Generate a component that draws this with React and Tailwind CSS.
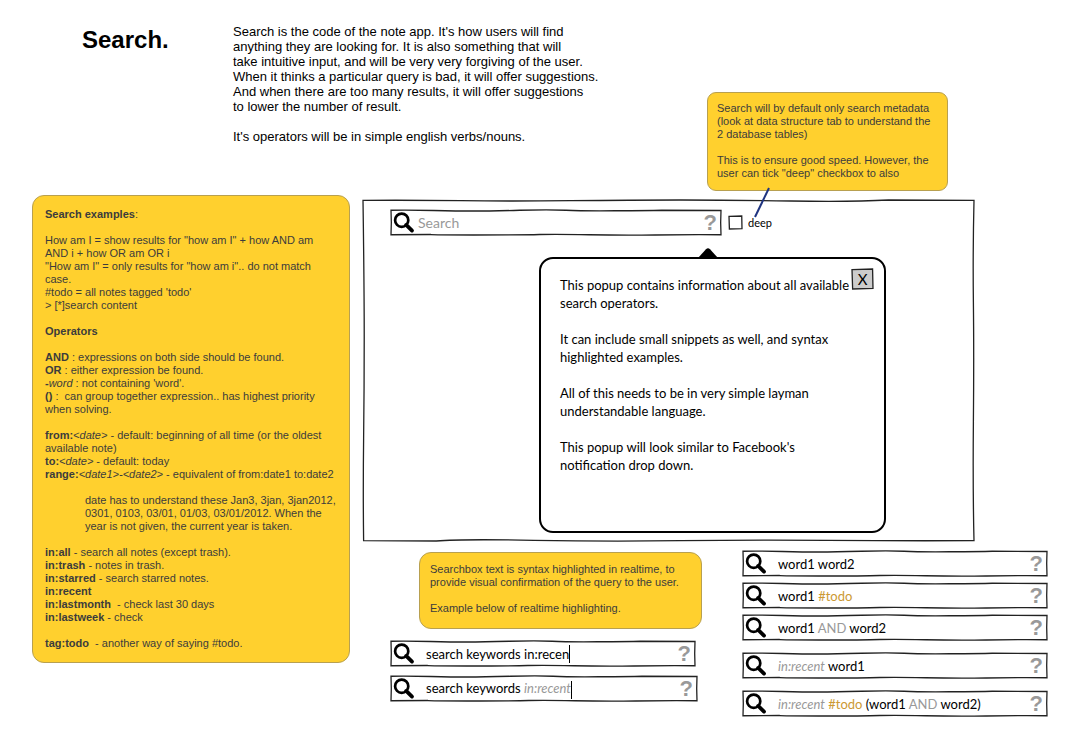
import React from "react";

const GRAY = "text-[#999999]";
const GOLD = "text-[#cc9933]";

const FRAMES = {
  panel:
    "M0 0.1 Q8 0 16 0.2 T34 0.2 T52 0 T70 0.3 T86 0 L100 0.1 Q99.8 15 99.9 30 T99.9 65 T100 99.9 Q88 100 76 99.8 T52 99.9 T28 99.8 T12 100 L0.1 99.9 Q0 85 0.1 70 T0.2 40 T0 0.1 Z",
  bar: "M0 1 Q6 0 13 2 T25 4 T39 1 T53 1 T68 3 T82 1 L100 2 L99.9 50 L100 99 Q90 98 80 100 T60 99 T45 98 T25 100 T12 98 L0 99 L0.1 50 Z",
  tiny: "M0 3 L98 0 L100 97 L3 100 Z",
};

function SketchFrame({ shape = "bar" }) {
  return (
    <svg
      aria-hidden="true"
      viewBox="0 0 100 100"
      preserveAspectRatio="none"
      className="pointer-events-none absolute inset-0 h-full w-full overflow-visible"
    >
      <path
        d={FRAMES[shape]}
        fill="none"
        stroke="#222"
        strokeWidth="1.3"
        vectorEffect="non-scaling-stroke"
      />
    </svg>
  );
}

function Magnifier() {
  return (
    <svg aria-hidden="true" viewBox="0 0 22 22" className="h-[22px] w-[22px] shrink-0">
      <circle cx="8.7" cy="8.2" r="6.6" fill="none" stroke="#000" strokeWidth="2.7" />
      <path d="M13.2 12.9 L19 18.6" stroke="#000" strokeWidth="3.8" strokeLinecap="round" />
    </svg>
  );
}

function SearchBox({ children, className = "" }) {
  return (
    <div className={`relative flex h-[25px] items-center pl-0.5 pr-1 ${className}`}>
      <SketchFrame />
      <Magnifier />
      {children}
      <button
        type="button"
        aria-label="Search help"
        className="relative ml-auto font-['Liberation_Sans',sans-serif] text-[22px] leading-6 font-bold text-[#999999]"
      >
        ?
      </button>
    </div>
  );
}

function Query({ label, children }) {
  return (
    <div
      role="textbox"
      aria-label={label}
      contentEditable
      suppressContentEditableWarning
      className="relative ml-[11px] flex-1 whitespace-pre text-[13px] leading-5 outline-none"
    >
      {children}
    </div>
  );
}

function Caret() {
  return <span aria-hidden="true" className="inline-block h-[18px] w-px bg-black align-middle" />;
}

function Note({ children, className = "" }) {
  return (
    <aside
      className={`relative border border-[#b8a050] bg-[#ffd02e] font-['Liberation_Sans',sans-serif] text-[11px] leading-[13px] text-[#3c3c3c] ${className}`}
    >
      {children}
    </aside>
  );
}

export default function App() {
  return (
    <main className="bg-white pb-5 font-[Lato,sans-serif] text-black">
      <header className="flex items-start pb-1 pl-[82px] font-['Liberation_Sans',sans-serif]">
        <h1 className="w-[151px] shrink-0 pt-6 text-[24px] leading-8 font-bold">Search.</h1>
        <div className="w-[474px] shrink-0 pt-6 text-[13px] leading-[15px]">
          <p>
            Search is the code of the note app. It's how users will find
            <br />
            anything they are looking for. It is also something that will
            <br />
            take intuitive input, and will be very very forgiving of the user.
            <br />
            When it thinks a particular query is bad, it will offer suggestions.
            <br />
            And when there are too many results, it will offer suggestions
            <br />
            to lower the number of result.
          </p>
          <p className="mt-[15px]">It's operators will be in simple english verbs/nouns.</p>
        </div>
        <Note className="z-10 mt-[92px] w-[241px] rounded-[9px] px-[9px] pt-[9px] pb-2.5">
          <p>
            Search will by default only search metadata
            <br />
            (look at data structure tab to understand the
            <br />2 database tables)
          </p>
          <p className="mt-[13px]">
            This is to ensure good speed. However, the
            <br />
            user can tick "deep" checkbox to also
          </p>
          <svg
            aria-hidden="true"
            viewBox="0 0 18 32"
            className="absolute top-[94px] left-[45px] h-8 w-[18px]"
          >
            <path d="M16 1 L2 30" stroke="#1f3480" strokeWidth="2" />
          </svg>
        </Note>
      </header>

      <div className="flex items-start gap-[13px] pr-[26px] pl-8">
        <Note className="w-[318px] shrink-0 rounded-[12px] p-3">
          <p>
            <b>Search examples</b>:
          </p>
          <p className="mt-[13px]">How am I = show results for "how am I" + how AND am AND i + how OR am OR i</p>
          <p>"How am I" = only results for "how am i".. do not match case.</p>
          <p>#todo = all notes tagged 'todo'</p>
          <p>&gt; [*]search content</p>
          <h2 className="my-[13px] font-bold">Operators</h2>
          <p><b>AND</b> : expressions on both side should be found.</p>
          <p><b>OR</b> : either expression be found.</p>
          <p><b>-</b><i>word</i> : not containing 'word'.</p>
          <p><b>()</b> :&nbsp; can group together expression.. has highest priority when solving.</p>
          <p className="mt-[13px]">
            <b>from:</b><i>&lt;date&gt;</i> - default: beginning of all time (or the oldest available note)
          </p>
          <p><b>to:</b><i>&lt;date&gt;</i> - default: today</p>
          <p><b>range:</b><i>&lt;date1&gt;-&lt;date2&gt;</i> - equivalent of from:date1 to:date2</p>
          <p className="my-[13px] pl-10">
            date has to understand these Jan3, 3jan, 3jan2012, 0301, 0103, 03/01, 01/03, 03/01/2012. When the
            year is not given, the current year is taken.
          </p>
          <p><b>in:all</b> - search all notes (except trash).</p>
          <p><b>in:trash</b> - notes in trash.</p>
          <p><b>in:starred</b> - search starred notes.</p>
          <p><b>in:recent</b></p>
          <p><b>in:lastmonth</b>&nbsp; - check last 30 days</p>
          <p><b>in:lastweek</b> - check</p>
          <p className="mt-[13px]"><b>tag:todo</b>&nbsp; - another way of saying #todo.</p>
        </Note>

        <div className="min-w-0 flex-1 pt-[5px]">
          <section className="relative mr-[73px] pt-2.5 pb-2">
            <SketchFrame shape="panel" />
            <div className="relative flex items-center pl-7">
              <SearchBox className="w-[330px]">
                <input
                  type="text"
                  aria-label="Search"
                  placeholder="Search"
                  className="relative ml-[3px] min-w-0 flex-1 bg-transparent text-[14px] leading-5 outline-none placeholder:text-[#999999]"
                />
              </SearchBox>
              <label className="ml-2 flex items-center gap-1.5 text-[11px] leading-4">
                <span className="relative flex h-[13px] w-[13px]">
                  <SketchFrame shape="tiny" />
                  <input type="checkbox" className="h-full w-full appearance-none checked:bg-black" />
                </span>
                deep
              </label>
            </div>

            <div
              role="dialog"
              aria-label="Search operators"
              className="relative mt-[22px] mr-[88px] ml-[176px] rounded-[14px] border-2 border-black bg-white pt-[17px] pr-[11px] pb-[57px] pl-[19px] text-[13px] leading-[18px]"
            >
              <svg
                aria-hidden="true"
                viewBox="0 0 20 10"
                className="absolute -top-[11px] left-[157px] h-2.5 w-5"
              >
                <path d="M0 10 L8 1.2 Q10 -0.6 12 1.2 L20 10 Z" />
              </svg>
              <div className="flex items-start justify-between">
                <div className="space-y-[18px]">
                  <p>
                    This popup contains information about all available
                    <br />
                    search operators.
                  </p>
                  <p>
                    It can include small snippets as well, and syntax
                    <br />
                    highlighted examples.
                  </p>
                  <p>
                    All of this needs to be in very simple layman
                    <br />
                    understandable language.
                  </p>
                  <p>
                    This popup will look similar to Facebook's
                    <br />
                    notification drop down.
                  </p>
                </div>
                <button
                  type="button"
                  aria-label="Close"
                  className="relative -mt-[7px] h-5 w-[21px] shrink-0 bg-[#cccccc] text-[15px] leading-5"
                >
                  <SketchFrame shape="tiny" />X
                </button>
              </div>
            </div>
          </section>

          <div className="flex items-start justify-between pl-7">
            <div>
              <Note className="mt-[11px] ml-7 w-[283px] rounded-[12px] px-2.5 pt-2.5 pb-[13px]">
                <p>
                  Searchbox text is syntax highlighted in realtime, to
                  <br />
                  provide visual confirmation of the query to the user.
                </p>
                <p className="mt-[13px]">Example below of realtime highlighting.</p>
              </Note>
              <SearchBox className="mt-3 w-[304px]">
                <input
                  type="text"
                  aria-label="Query being typed"
                  defaultValue="search keywords in:recen"
                  className="relative ml-[11px] field-sizing-content bg-transparent text-[13px] leading-5 outline-none"
                />
                <Caret />
              </SearchBox>
              <SearchBox className="mt-2.5 w-[306px]">
                <Query label="Query highlighted">
                  search keywords <i className={GRAY}>in:recent</i>
                  <Caret />
                </Query>
              </SearchBox>
            </div>

            <div className="w-[304px] pt-2.5">
              <SearchBox>
                <input
                  type="text"
                  aria-label="Two words"
                  defaultValue="word1 word2"
                  className="relative ml-[11px] min-w-0 flex-1 bg-transparent text-[13px] leading-5 outline-none"
                />
              </SearchBox>
              <SearchBox className="mt-[7px]">
                <Query label="Word and tag">
                  word1 <span className={GOLD}>#todo</span>
                </Query>
              </SearchBox>
              <SearchBox className="mt-[7px]">
                <Query label="Words with AND">
                  word1 <span className={GRAY}>AND</span> word2
                </Query>
              </SearchBox>
              <SearchBox className="mt-[13px]">
                <Query label="Recent notes with word">
                  <i className={GRAY}>in:recent</i> word1
                </Query>
              </SearchBox>
              <SearchBox className="mt-[13px]">
                <Query label="Grouped query">
                  <i className={GRAY}>in:recent</i> <span className={GOLD}>#todo</span> (word1{" "}
                  <span className={GRAY}>AND</span> word2)
                </Query>
              </SearchBox>
            </div>
          </div>
        </div>
      </div>
    </main>
  );
}
